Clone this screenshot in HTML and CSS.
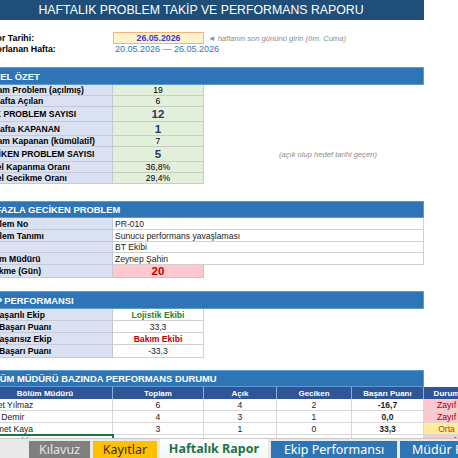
FILE: index.html
```html
<!DOCTYPE html>
<html lang="tr">
<head>
<meta charset="utf-8">
<title>Haftalık Rapor</title>
<link rel="stylesheet" href="styles.css">
</head>
<body>
<div class="app">
  <div class="sheet">
    <div class="canvas">
      <div class="title">HAFTALIK PROBLEM TAKİP VE PERFORMANS RAPORU</div>

      <div class="block m12">
        <div class="row h11">
          <div class="c plain">Rapor Tarihi:</div>
          <div class="c date-input">26.05.2026</div>
          <div class="c hint">◄ haftanın son gününü girin (örn. Cuma)</div>
        </div>
        <div class="row h12">
          <div class="c plain">Raporlanan Hafta:</div>
          <div class="c range">20.05.2026 — 26.05.2026</div>
        </div>
      </div>

      <div class="block m12">
        <div class="sec h18">GENEL ÖZET</div>
        <div class="row h11"><div class="c lbl">Toplam Problem (açılmış)</div><div class="c val">19</div></div>
        <div class="row h11"><div class="c lbl">Bu Hafta Açılan</div><div class="c val">6</div></div>
        <div class="row h15"><div class="c lbl">AÇIK PROBLEM SAYISI</div><div class="c val big">12</div></div>
        <div class="row h14"><div class="c lbl">Bu Hafta KAPANAN</div><div class="c val big">1</div></div>
        <div class="row h11"><div class="c lbl">Toplam Kapanan (kümülatif)</div><div class="c val">7</div></div>
        <div class="row h15"><div class="c lbl">GECİKEN PROBLEM SAYISI</div><div class="c val big">5</div><div class="c"></div><div class="c note">(açık olup hedef tarihi geçen)</div></div>
        <div class="row h11"><div class="c lbl">Genel Kapanma Oranı</div><div class="c val">36,8%</div></div>
        <div class="row h11"><div class="c lbl">Genel Gecikme Oranı</div><div class="c val">29,4%</div></div>
      </div>

      <div class="block m17">
        <div class="sec h17">EN FAZLA GECİKEN PROBLEM</div>
        <div class="row h12"><div class="c lbl">Problem No</div><div class="c wval">PR-010</div></div>
        <div class="row h12"><div class="c lbl">Problem Tanımı</div><div class="c wval">Sunucu performans yavaşlaması</div></div>
        <div class="row h11"><div class="c lbl">Ekip</div><div class="c wval">BT Ekibi</div></div>
        <div class="row h12"><div class="c lbl">Bölüm Müdürü</div><div class="c wval">Zeynep Şahin</div></div>
        <div class="row h13"><div class="c lbl">Gecikme (Gün)</div><div class="c bad-val">20</div></div>
      </div>

      <div class="block m13">
        <div class="sec h18">EKİP PERFORMANSI</div>
        <div class="row h12"><div class="c lbl">En Başarılı Ekip</div><div class="c wcell good">Lojistik Ekibi</div></div>
        <div class="row h12"><div class="c lbl indent">Başarı Puanı</div><div class="c wcell">33,3</div></div>
        <div class="row h12"><div class="c lbl">En Başarısız Ekip</div><div class="c wcell bad">Bakım Ekibi</div></div>
        <div class="row h13"><div class="c lbl indent">Başarı Puanı</div><div class="c wcell">-33,3</div></div>
      </div>

      <div class="block m12">
        <div class="sec h17">BÖLÜM MÜDÜRÜ BAZINDA PERFORMANS DURUMU</div>
        <div class="row h12 thead">
          <div class="c th">Bölüm Müdürü</div><div class="c th">Toplam</div><div class="c th">Açık</div><div class="c th">Geciken</div><div class="c th">Başarı Puanı</div><div class="c th">Durum</div>
        </div>
        <div class="row h12">
          <div class="c td name">Ahmet Yılmaz</div><div class="c td">6</div><div class="c td">4</div><div class="c td">2</div><div class="c td score">-16,7</div><div class="c td st-low">Zayıf</div>
        </div>
        <div class="row h12">
          <div class="c td name">Ayşe Demir</div><div class="c td">4</div><div class="c td">3</div><div class="c td">1</div><div class="c td score">0,0</div><div class="c td st-low">Zayıf</div>
        </div>
        <div class="row h12">
          <div class="c td name">Mehmet Kaya</div><div class="c td">3</div><div class="c td">1</div><div class="c td">0</div><div class="c td score">33,3</div><div class="c td st-mid">Orta</div>
        </div>
        <div class="row h12">
          <div class="c td name sel">Zeynep Şahin</div><div class="c td">6</div><div class="c td">4</div><div class="c td">2</div><div class="c td score">-16,7</div><div class="c td st-low">Zayıf</div>
        </div>
      </div>
    </div>
  </div>

  <div class="tabs">
    <div class="tab t-gray">Kılavuz</div>
    <div class="tab t-yellow">Kayıtlar</div>
    <div class="tab t-active">Haftalık Rapor</div>
    <div class="tab t-blue t-ekip">Ekip Performansı</div>
    <div class="tab t-blue t-mudur">Müdür Performansı</div>
  </div>
</div>
</body>
</html>
```

FILE: styles.css
```css
html, body {
  margin: 0;
  padding: 0;
  background: #ffffff;
}

body {
  font-family: "Liberation Sans", Arial, sans-serif;
  color: #000;
}

.app {
  width: 458px;
  height: 458px;
  display: flex;
  flex-direction: column;
  overflow: hidden;
  background: #fff;
}

.sheet {
  flex: 1;
  overflow: hidden;
}

.canvas {
  margin-left: -22px;
  width: 520px;
}

.title {
  height: 20px;
  width: 446px;
  background: #1F4E79;
  color: #fff;
  font-size: 12.3px;
  display: flex;
  align-items: center;
  justify-content: center;
}

.m12 { margin-top: 12px; }
.m13 { margin-top: 13px; }
.m17 { margin-top: 17px; }

.row {
  display: grid;
  grid-template-columns: 135px 91px 73px 75px 72px 46px;
}

.h11 { height: 11px; }
.h12 { height: 12px; }
.h13 { height: 13px; }
.h14 { height: 14px; }
.h15 { height: 15px; }
.h17 { height: 17px; }
.h18 { height: 18px; }

.c {
  box-sizing: border-box;
  display: flex;
  align-items: center;
  white-space: nowrap;
  font-size: 8.6px;
  padding: 0 2px;
  min-width: 0;
  overflow: visible;
}

.plain {
  font-weight: bold;
  font-size: 8.8px;
}

.date-input {
  background: #FFF2CC;
  border: 1px solid #F4B183;
  color: #3B3BCF;
  font-weight: bold;
  font-size: 8.8px;
  justify-content: center;
}

.hint {
  color: #8C8C8C;
  font-style: italic;
  font-size: 7.6px;
  padding-left: 4px;
}

.range {
  color: #2E75B6;
  font-size: 9px;
}

.sec {
  box-sizing: border-box;
  width: 446px;
  background: #2E75B6;
  border: 1px solid #5B9BD5;
  color: #fff;
  font-weight: bold;
  font-size: 9.4px;
  display: flex;
  align-items: center;
  padding-left: 1px;
}

.lbl {
  background: #D9E1F2;
  font-weight: bold;
  border-right: 1px solid #C4C9D4;
  border-bottom: 1px solid #C4C9D4;
}

.indent {
  padding-left: 21px;
}

.val {
  background: #E2EFDA;
  justify-content: center;
  border-right: 1px solid #C6CFC0;
  border-bottom: 1px solid #C6CFC0;
}

.big {
  font-size: 11.5px;
  font-weight: bold;
  color: #1F3864;
}

.note {
  color: #8C8C8C;
  font-style: italic;
  font-size: 7.6px;
}

.wval {
  grid-column: span 4;
  background: #fff;
  border-right: 1px solid #D0D0D0;
  border-bottom: 1px solid #D0D0D0;
  color: #222;
}

.bad-val {
  background: #FFC7CE;
  color: #C00000;
  font-weight: bold;
  font-size: 11.5px;
  justify-content: center;
  border-right: 1px solid #E6B3BA;
  border-bottom: 1px solid #E6B3BA;
}

.wcell {
  background: #fff;
  justify-content: center;
  border-right: 1px solid #D0D0D0;
  border-bottom: 1px solid #D0D0D0;
  color: #222;
}

.good {
  color: #2E7D32;
  font-weight: bold;
}

.bad {
  color: #C00000;
  font-weight: bold;
}

.thead {
  background: #2F5597;
}

.th {
  color: #fff;
  font-weight: bold;
  font-size: 8px;
  justify-content: center;
  border-right: 1px solid #8EA9DB;
}

.td {
  justify-content: center;
  border-right: 1px solid #D9D9D9;
  border-bottom: 1px solid #D9D9D9;
  color: #222;
}

.name {
  justify-content: flex-start;
}

.score {
  font-weight: bold;
}

.st-low {
  background: #FFC7CE;
  color: #9C0006;
}

.st-mid {
  background: #FFEB9C;
  color: #9C5700;
}

.sel {
  outline: 2px solid #217346;
  outline-offset: -1px;
}

.tabs {
  height: 20px;
  flex: none;
  display: flex;
  gap: 3px;
  padding-left: 29px;
  padding-top: 2px;
  box-sizing: border-box;
  background: #E9E9E9;
  border-top: 1px solid #C8C8C8;
  overflow: hidden;
  font-family: "Noto Sans", "Open Sans", sans-serif;
  font-size: 12.5px;
}

.tab {
  flex: none;
  display: flex;
  align-items: center;
  justify-content: center;
  height: 18px;
  line-height: 1;
  white-space: nowrap;
}

.t-gray {
  width: 61px;
  background: #7F7F7F;
  color: #E6E6E6;
}

.t-yellow {
  width: 64px;
  background: #FFC000;
  color: #3A3000;
}

.t-active {
  width: 108px;
  margin-top: -2px;
  height: 20px;
  background: linear-gradient(#ffffff, #f2f7f3);
  color: #217346;
  font-weight: bold;
}

.t-blue {
  background: #2E75B6;
  color: #fff;
}

.t-ekip {
  width: 126px;
}

.t-mudur {
  width: 130px;
  justify-content: flex-start;
  padding-left: 12px;
  box-sizing: border-box;
}
```
